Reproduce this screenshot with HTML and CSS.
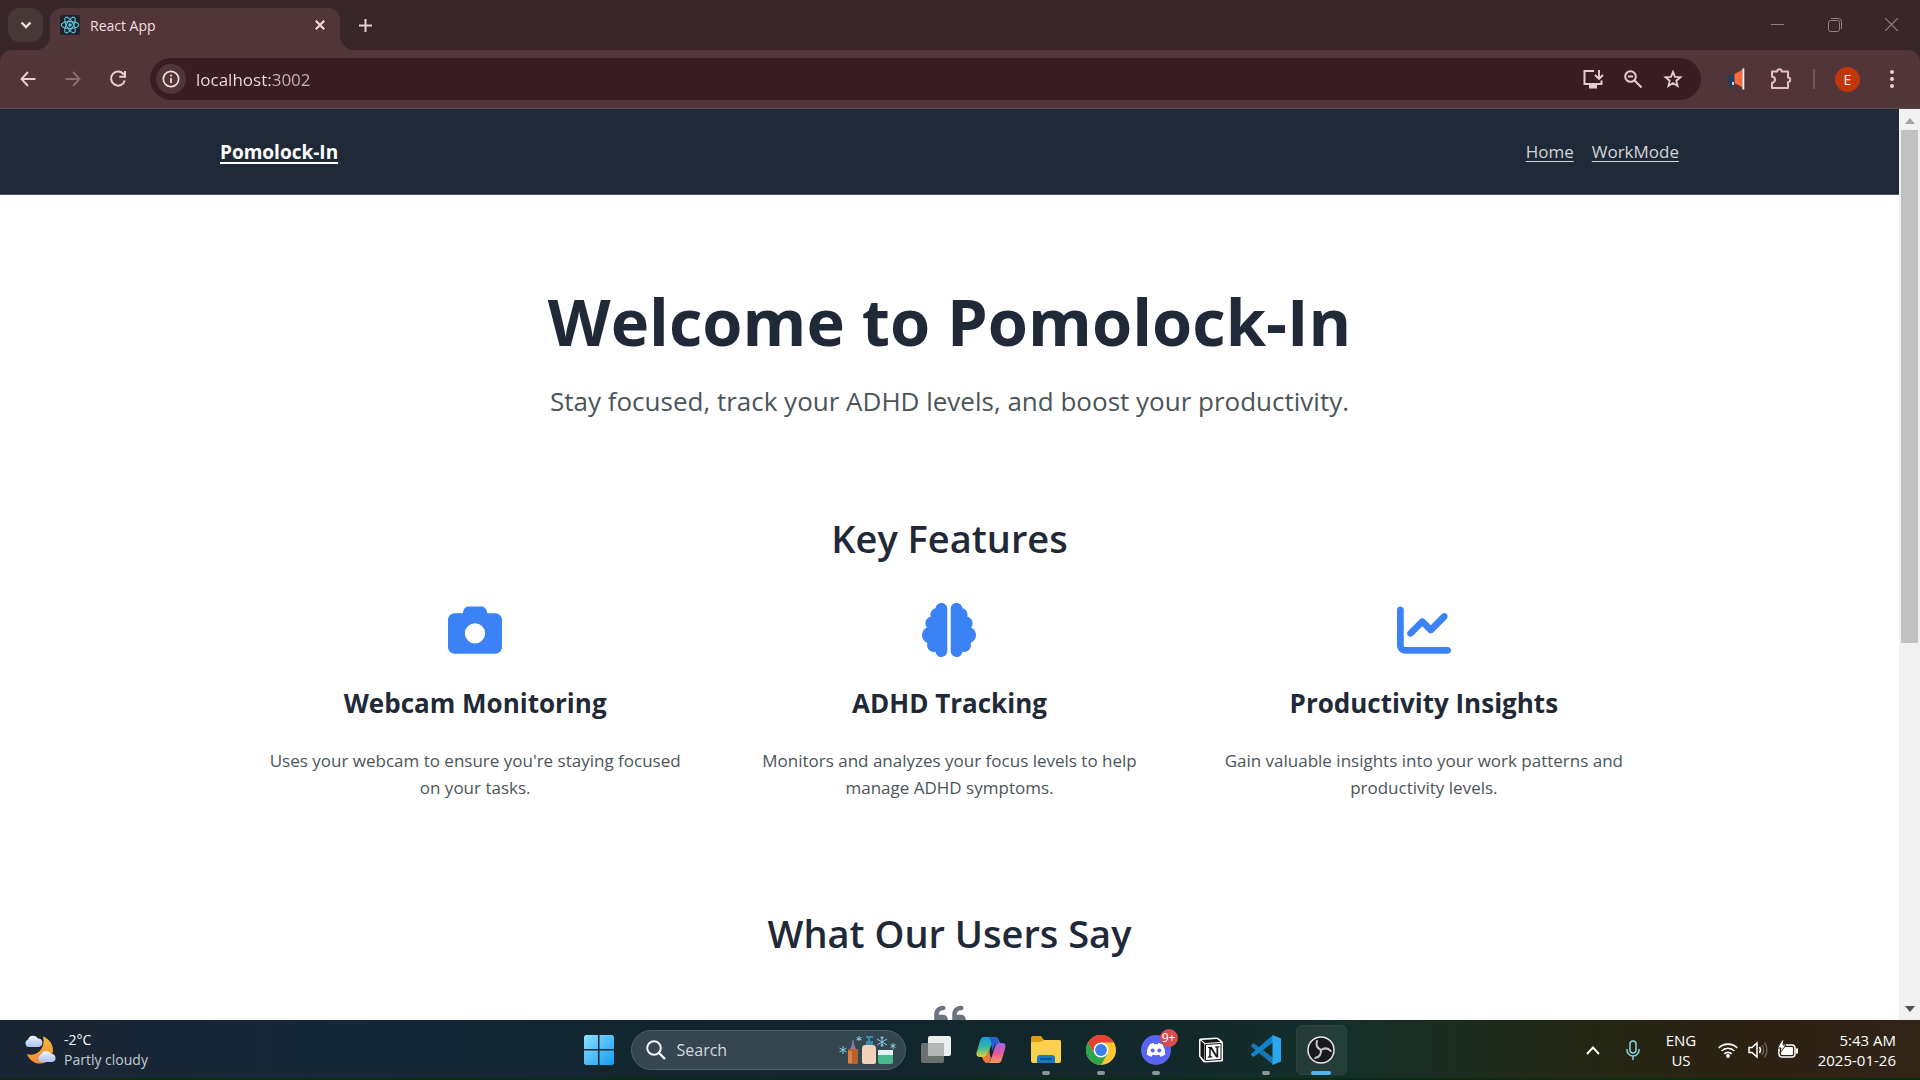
FILE: index.html
```html
<!DOCTYPE html>
<html lang="en">
<head>
<meta charset="utf-8">
<title>React App</title>
<link rel="stylesheet" href="styles.css">
</head>
<body>
<header class="browser">
  <div class="tabstrip">
    <button class="tab-search" aria-label="Search tabs"><svg width="12" height="8" viewBox="0 0 12 8"><path d="M1.500 1.500L6 6l4.500-4.500" fill="none" stroke="#f4dfe0" stroke-width="2.400"/></svg></button>
    <div class="tab">
      <svg width="20" height="20" viewBox="0 0 20 20"><rect width="20" height="20" rx="2" fill="#20242a"/><g fill="none" stroke="#5cc3dc" stroke-width="1.100"><ellipse cx="10" cy="10" rx="8.800" ry="3.400"/><ellipse cx="10" cy="10" rx="8.800" ry="3.400" transform="rotate(60 10 10)"/><ellipse cx="10" cy="10" rx="8.800" ry="3.400" transform="rotate(120 10 10)"/></g><circle cx="10" cy="10" r="1.800" fill="#5cc3dc"/></svg>
      <span class="tab-title">React App</span>
      <button class="tab-close" aria-label="Close tab"><svg width="10" height="10" viewBox="0 0 10 10"><path d="M.8.800l8.400 8.400M9.200.800L.8 9.200" stroke="#f4dfe0" stroke-width="2"/></svg></button>
    </div>
    <button class="new-tab" aria-label="New tab"><svg width="13" height="13" viewBox="0 0 13 13"><path d="M6.500 0v13M0 6.500h13" stroke="#e6cfd1" stroke-width="2"/></svg></button>
    <div class="window-controls">
      <button aria-label="Minimize"><svg width="13" height="13" viewBox="0 0 13 13"><path d="M0 6.500h13" stroke="#8f8083"/></svg></button>
      <button aria-label="Restore"><svg width="14" height="14" viewBox="0 0 14 14"><g fill="none" stroke="#8f8083"><rect x=".5" y="2.500" width="11" height="11" rx="2"/><path d="M3 .5h7.500a3 3 0 0 1 3 3V11"/></g></svg></button>
      <button aria-label="Close"><svg width="13" height="13" viewBox="0 0 13 13"><path d="M0 0l13 13M13 0L0 13" stroke="#8f8083" stroke-width="1.200"/></svg></button>
    </div>
  </div>
  <div class="toolbar">
    <button class="tool" aria-label="Back"><svg width="16" height="16" viewBox="0 0 16 16"><path d="M15.500 8H2M8 1L1.500 8 8 15" fill="none" stroke="#eccfd3" stroke-width="1.900"/></svg></button>
    <button class="tool" aria-label="Forward"><svg width="16" height="16" viewBox="0 0 16 16"><path d="M.5 8H14M8 1l6.500 7L8 15" fill="none" stroke="#8b6c70" stroke-width="1.900"/></svg></button>
    <button class="tool" aria-label="Reload"><svg width="18" height="18" viewBox="0 0 18 18"><path d="M14.800 4.600A7 7 0 1 0 15.800 10.500M16 1v5.800h-5.800" fill="none" stroke="#eccfd3" stroke-width="2"/></svg></button>
    <div class="omnibox">
      <button class="site-info" aria-label="Site information"><svg width="18" height="18" viewBox="0 0 18 18"><circle cx="9" cy="9" r="7.700" fill="none" stroke="#f0dcde" stroke-width="1.700"/><path d="M9 8v5M9 4.800v1.800" stroke="#f0dcde" stroke-width="1.800"/></svg></button>
      <input class="address" type="text" aria-label="Address" value="localhost:3002">
      <button class="action" aria-label="Install app"><svg width="22" height="20" viewBox="0 0 22 20"><path d="M12 2H2.500v13h17v-3.500" fill="none" stroke="#e5ccd0" stroke-width="2"/><path d="M7 16h8v3.500H7z" fill="#e5ccd0"/><path d="M17 1v8.500M13 6l4 4 4-4" fill="none" stroke="#e5ccd0" stroke-width="1.900"/></svg></button>
      <button class="action" aria-label="Zoom"><svg width="18" height="18" viewBox="0 0 18 18"><g fill="none" stroke="#e5ccd0" stroke-width="2"><circle cx="6.500" cy="6.500" r="5.300"/><path d="M10.500 10.500l7 7M4 6.500h5"/></g></svg></button>
      <button class="action" aria-label="Bookmark"><svg width="20" height="20" viewBox="0 0 20 20"><path d="M10 2.800l2 5 5.500.4-4.200 3.500 1.300 5.300-4.600-2.900L5.400 17l1.300-5.300-4.200-3.500L8 7.800z" fill="none" stroke="#e5ccd0" stroke-width="1.800"/></svg></button>
    </div>
    <button class="tool ext" aria-label="Megaphone"><svg width="20" height="22" viewBox="0 0 20 22"><path d="M1 7h8v9H7l-1 5H4l-1-5-2-2z" fill="#1f3f5c"/><path d="M8.500 6L16 2v17l-7.500-4z" fill="#fb6b3c"/><path d="M17.300.5v21" stroke="#f5eeee" stroke-width="2"/><path d="M7 14v3" stroke="#fff" stroke-width="1.500"/></svg></button>
    <button class="tool" aria-label="Extensions"><svg width="22" height="22" viewBox="0 0 22 22"><path d="M2 3.500h5.300a2 2 0 0 1 4.400 0H18v6a2 2 0 0 1 0 4.400V20H2v-5.300a3 3 0 0 0 0-6z" fill="none" stroke="#e5bfc6" stroke-width="2" stroke-linejoin="round"/></svg></button>
    <span class="divider"></span>
    <button class="avatar">E</button>
    <button class="tool menu" aria-label="Menu"><svg width="4" height="18" viewBox="0 0 4 18"><g fill="#eccfd3"><circle cx="2" cy="2" r="2"/><circle cx="2" cy="9" r="2"/><circle cx="2" cy="16" r="2"/></g></svg></button>
  </div>
</header>

<div class="viewport">
  <div class="page">
    <nav class="navbar">
      <div class="container nav-row">
        <a class="brand" href="#">Pomolock-In</a>
        <div class="nav-links"><a href="#">Home</a><a href="#">WorkMode</a></div>
      </div>
    </nav>
    <main class="container">
      <section class="hero">
        <h1>Welcome to Pomolock-In</h1>
        <p>Stay focused, track your ADHD levels, and boost your productivity.</p>
      </section>
      <section class="features">
        <h2>Key Features</h2>
        <div class="feature-grid">
          <article class="feature">
            <svg class="feature-icon" viewBox="0 0 512 512"><path d="M149.100 64.800L138.700 96H64C28.700 96 0 124.700 0 160V416c0 35.300 28.700 64 64 64H448c35.300 0 64-28.700 64-64V160c0-35.300-28.700-64-64-64H373.300L362.900 64.800C356.400 45.200 338.100 32 317.400 32H194.600c-20.700 0-39 13.200-45.500 32.800zM256 192a96 96 0 1 1 0 192 96 96 0 1 1 0-192z"/></svg>
            <h3>Webcam Monitoring</h3>
            <p>Uses your webcam to ensure you're staying focused on your tasks.</p>
          </article>
          <article class="feature">
            <svg class="feature-icon" viewBox="0 0 512 512"><path d="M184 0c30.900 0 56 25.100 56 56V456c0 30.900-25.100 56-56 56c-28.900 0-52.700-21.900-55.700-50.100c-5.200 1.400-10.700 2.100-16.300 2.100c-35.300 0-64-28.700-64-64c0-7.400 1.300-14.600 3.600-21.200C21.400 367.400 0 338.200 0 304c0-31.900 18.700-59.500 45.800-72.300C37.100 220.800 32 207 32 192c0-30.700 21.600-56.300 50.400-62.600C80.800 123.900 80 118 80 112c0-29.900 20.600-55.100 48.300-62.100C131.300 21.900 155.100 0 184 0zM328 0c28.900 0 52.600 21.900 55.700 49.900c27.800 7 48.300 32.100 48.300 62.100c0 6-.8 11.900-2.400 17.400c28.800 6.200 50.400 31.900 50.400 62.600c0 15-5.100 28.800-13.800 39.700C493.300 244.500 512 272.100 512 304c0 34.200-21.400 63.400-51.600 74.800c2.300 6.600 3.600 13.800 3.600 21.200c0 35.300-28.700 64-64 64c-5.600 0-11.100-.7-16.300-2.100c-3 28.200-26.800 50.100-55.700 50.100c-30.900 0-56-25.100-56-56V56c0-30.900 25.100-56 56-56z"/></svg>
            <h3>ADHD Tracking</h3>
            <p>Monitors and analyzes your focus levels to help manage ADHD symptoms.</p>
          </article>
          <article class="feature">
            <svg class="feature-icon" viewBox="0 0 512 512"><path d="M64 64c0-17.700-14.300-32-32-32S0 46.300 0 64V400c0 44.200 35.800 80 80 80H480c17.700 0 32-14.300 32-32s-14.300-32-32-32H80c-8.800 0-16-7.200-16-16V64zm406.600 86.600c12.500-12.500 12.500-32.800 0-45.300s-32.800-12.500-45.300 0L320 210.700l-57.400-57.400c-12.500-12.500-32.800-12.500-45.300 0l-112 112c-12.500 12.500-12.500 32.800 0 45.300s32.800 12.500 45.300 0L240 221.300l57.400 57.400c12.500 12.500 32.800 12.500 45.300 0l128-128z"/></svg>
            <h3>Productivity Insights</h3>
            <p>Gain valuable insights into your work patterns and productivity levels.</p>
          </article>
        </div>
      </section>
      <section class="testimonials">
        <h2>What Our Users Say</h2>
        <svg class="quote" viewBox="0 0 448 512"><path id="q" d="M0 216C0 149.700 53.700 96 120 96h8c17.700 0 32 14.300 32 32s-14.300 32-32 32h-8c-30.900 0-56 25.100-56 56v8h64c35.300 0 64 28.700 64 64v64c0 35.300-28.700 64-64 64H64c-35.300 0-64-28.700-64-64V216z"/><use href="#q" x="256"/></svg>
      </section>
    </main>
  </div>
  <div class="scrollbar">
    <svg width="10" height="6" viewBox="0 0 10 6"><path d="M0 6l5-6 5 6z" fill="#a3a3a3"/></svg>
    <div class="track"><div class="thumb"></div></div>
    <svg width="10" height="6" viewBox="0 0 10 6"><path d="M0 0l5 6 5-6z" fill="#505050"/></svg>
  </div>
</div>

<footer class="taskbar">
  <button class="weather">
    <svg width="32" height="30" viewBox="0 0 32 30"><defs><linearGradient id="moon" x2="0" y2="1"><stop offset="0" stop-color="#f6b92f"/><stop offset="1" stop-color="#f08a3c"/></linearGradient><linearGradient id="cl" x2="0" y2="1"><stop offset="0" stop-color="#f0f5ff"/><stop offset="1" stop-color="#a9c2f0"/></linearGradient></defs><path d="M19 1.500C31 6 32 20 23 26.500 16 31 6 28 3 19c9 3 19-5 16-17.500z" fill="url(#moon)"/><path d="M4 12a4 4 0 0 1 0-7.500 5.500 5.500 0 0 1 10-1A4.300 4.300 0 0 1 15 12z" fill="url(#cl)"/><path d="M17 27a4 4 0 0 1 0-7.500 5.500 5.500 0 0 1 10-.5 4 4 0 0 1 1 8z" fill="url(#cl)"/></svg>
    <span class="weather-text"><span>-2°C</span><span class="dim">Partly cloudy</span></span>
  </button>
  <div class="apps">
    <button class="app" aria-label="Start"><svg width="30" height="30" viewBox="0 0 30 30"><defs><linearGradient id="win" x2="1" y2="1"><stop offset="0" stop-color="#8be0ff"/><stop offset="1" stop-color="#159cf0"/></linearGradient></defs><path d="M1.500 0H14v14H0V1.500zM15.500 0h13L30 1.500V14H15.500zM0 15.500h14V30H1.500L0 28.500zM15.500 15.500H30v13L28.500 30h-13z" fill="url(#win)"/></svg></button>
    <label class="search">
      <svg width="20" height="20" viewBox="0 0 20 20"><circle cx="8" cy="8" r="6.800" fill="none" stroke="#f0f4f6" stroke-width="2"/><path d="M13 13l6 6" stroke="#f0f4f6" stroke-width="2.400"/></svg>
      <input type="search" placeholder="Search" aria-label="Search">
      <svg width="58" height="30" viewBox="0 0 58 30"><path d="M10 14h10v14q0 1-1 1h-8q-1 0-1-1z" fill="#b9612c"/><path d="M10 16h4v12h-4z" fill="#da8145"/><path d="M12 14l2-5q0-4 1-4t1 4l2 5z" fill="#8c74ad"/><path d="M24 14q0-4 3-4h8q3 0 3 4v13q0 2-2 2H26q-2 0-2-2z" fill="#f2d2bd"/><path d="M28 6h7v4h-7zM28 1h7v2h-3v3h-2V3h-2z" fill="#368da7"/><path d="M40 16h15v11q0 2-2 2H42q-2 0-2-2z" fill="#45b98b"/><path d="M40 15h15v5H40z" fill="#e4f3f0"/><g stroke="#86cae5" stroke-width="1"><path d="M44 1v11M39 4l10 6M49 4l-10 6M42.500 2l1.500 2 1.500-2M42.500 11l1.500-2 1.500 2M5 11v8M1.500 13l7 4M8.500 13l-7 4M21 1v5M18.500 2.500l5 2.500M23.500 2.500l-5 2.500M55 8v6M52.500 9.500l5 3M57.500 9.500l-5 3" fill="none"/></g></svg>
    </label>
    <button class="app" aria-label="Task view"><svg width="30" height="30" viewBox="0 0 30 30"><rect x="0" y="8" width="23" height="20" rx="2" fill="#6c716f"/><rect x="7" y="1" width="23" height="20" rx="2" fill="#eceded"/><path d="M7 8h16v13H9q-2 0-2-2z" fill="#b5b8b7"/></svg></button>
    <button class="app" aria-label="Copilot"><svg width="30" height="28" viewBox="0 0 30 28"><defs><linearGradient id="c1" x2="0" y2="1"><stop offset="0" stop-color="#159ade"/><stop offset=".5" stop-color="#35b7a5"/><stop offset="1" stop-color="#e2cf35"/></linearGradient><linearGradient id="c2" x2="0" y2="1"><stop offset="0" stop-color="#9a66e9"/><stop offset=".5" stop-color="#e5579d"/><stop offset="1" stop-color="#fb9a58"/></linearGradient></defs><path d="M8 1h11q3 0 4 4l1 2h-5q-3 0-4 3l-3 7q-1 4-4 4H4q-5 0-3-6L4 5q1-4 4-4z" fill="url(#c1)"/><path d="M22 27H11q3 0 4-4l4-12q1-4 4-4h3q5 0 3 6l-3 10q-1 4-4 4z" fill="url(#c2)"/><path d="M13 1h6q3 0 4 6-4 0-5 4l-2 4q0-9-3-14z" fill="#2b5cd1"/><path d="M6 21h4l4-8q-1 6 1 9-1 5-4 5-3 0-5-6z" fill="#f0793e"/></svg></button>
    <button class="app running" aria-label="File Explorer"><svg width="30" height="28" viewBox="0 0 30 28"><path d="M0 2q0-2 2-2h8l3 4h15q2 0 2 2v6H0z" fill="#dc9d12"/><path d="M0 6h9l4-2h15q2 0 2 2v19q0 2-2 2H2q-2 0-2-2z" fill="#fcd04c"/><path d="M6 27v-5q0-3 3-3h12q3 0 3 3v5z" fill="#167bc7"/><path d="M10 23h10" stroke="#0c5291" stroke-width="2" stroke-linecap="round"/></svg></button>
    <button class="app running" aria-label="Chrome"><svg width="30" height="30" viewBox="0 0 30 30"><circle cx="15" cy="15" r="15" fill="#fcc934"/><path d="M15 7.500h13A15 15 0 0 0 2 7.500L8.500 19z" fill="#e34234"/><path d="M2 7.500A15 15 0 0 0 15 30l6.500-11.200L15 15 8.500 18.800z" fill="#31a350"/><circle cx="15" cy="15" r="7.400" fill="#fff"/><circle cx="15" cy="15" r="5.900" fill="#3c7ee8"/></svg></button>
    <button class="app running" aria-label="Discord"><svg width="30" height="30" viewBox="0 0 30 30"><circle cx="15" cy="15" r="15" fill="#5865f2"/><path d="M8.500 9.500q2-1.200 4.200-1.500l.7 1.300h3.200l.7-1.300q2.200.3 4.200 1.500 3 4.500 2.800 10-2.300 1.700-4.800 2.300l-1.200-2q-3.300.8-6.600 0l-1.200 2Q8 21.200 5.700 19.500q-.2-5.500 2.800-10z" fill="#fff"/><circle cx="11.700" cy="15.500" r="2" fill="#5865f2"/><circle cx="18.300" cy="15.500" r="2" fill="#5865f2"/></svg><span class="badge">9+</span></button>
    <button class="app" aria-label="Notion"><svg width="26" height="26" viewBox="0 0 26 26"><path d="M1 3q0-1.500 1.500-1.600L18 .5q1.500 0 3 1l3 2.500q1 1 1 2v17q0 1.500-1.500 1.600L7 25.500q-1.500 0-2.500-1.200L1.500 20Q1 19.500 1 18.500z" fill="#fff"/><path d="M2.500 3.500l4 3.500v16.500l-4-4.500zM7 6L3.500 3 19 2l3.500 3z" fill="#151515"/><path d="M7.500 7.500L23 6.500v16L7.500 23.500z" fill="#fff" stroke="#151515"/><path d="M10 10l3.500-.2 5 8v-7l-1.500-.3V9.500l4.500-.2v1l-1.300.3v9.600l-2 .2-5.500-8.400v7.200l1.600.3v1l-4.500.2v-1l1.400-.4V11L10 11z" fill="#151515"/></svg></button>
    <button class="app running" aria-label="Visual Studio Code"><svg width="30" height="30" viewBox="0 0 30 30"><path d="M0 10.500L2.500 8l20 15v7L0 11.500z" fill="#1877b8"/><path d="M0 19L22 0v7.500L2.500 22 0 20z" fill="#1482ca"/><path d="M21.500 0L30 3.500v23L21.500 30z" fill="#2aa7ee"/></svg></button>
    <button class="app active" aria-label="OBS Studio"><svg width="28" height="28" viewBox="0 0 28 28"><circle cx="14" cy="14" r="13" fill="#1b191b" stroke="#e8e8e8" stroke-width="1.500"/><g fill="none" stroke="#c9c9cb" stroke-width="2" stroke-linecap="round"><path d="M14 14Q8 11 10 5"/><path d="M14 14Q8 11 10 5" transform="rotate(120 14 14)"/><path d="M14 14Q8 11 10 5" transform="rotate(240 14 14)"/></g></svg></button>
  </div>
  <div class="tray">
    <button class="chevron" aria-label="Hidden icons"><svg width="14" height="9" viewBox="0 0 14 9"><path d="M1 8l6-6.500L13 8" fill="none" stroke="#fff" stroke-width="1.900"/></svg></button>
    <button class="mic" aria-label="Microphone"><svg width="14" height="20" viewBox="0 0 14 20"><g fill="none" stroke="#8bd3dc" stroke-width="1.500"><rect x="4" y="1" width="6" height="12" rx="3"/><path d="M1 9v1a6 6 0 0 0 12 0V9M7 16v4"/></g></svg></button>
    <button class="lang"><span>ENG</span><span>US</span></button>
    <button class="status" aria-label="Network, volume and battery">
      <svg width="20" height="16" viewBox="0 0 20 16"><g fill="none" stroke="#fff" stroke-width="1.600"><path d="M.7 6a13 13 0 0 1 18.600 0M3.500 9a9 9 0 0 1 13 0M6.300 12a5 5 0 0 1 7.400 0"/></g><circle cx="10" cy="14" r="1.900" fill="#fff"/></svg>
      <svg width="20" height="18" viewBox="0 0 20 18"><path d="M1 6.500h3L9 2v14l-5-4.500H1zM11.500 6q2 3 0 6" fill="none" stroke="#fff" stroke-width="1.500"/><path d="M14 4q3.500 5 0 10M16.500 1.500q5 7.500 0 15" fill="none" stroke="#76705f" stroke-width="1.200"/></svg>
      <svg width="20" height="18" viewBox="0 0 20 18"><rect x="1" y="4" width="16" height="12" rx="3" fill="none" stroke="#fff" stroke-width="1.600"/><rect x="3" y="6" width="12" height="8" rx="1" fill="#fff"/><path d="M18 7.500h2v5h-2z" fill="#fff"/><path d="M4-1L-.5 7H3l-1 5 6-8H5l1-5z" fill="#fff" stroke="#2a2315"/></svg>
    </button>
    <button class="clock"><span>5:43 AM</span><span>2025-01-26</span></button>
  </div>
</footer>
</body>
</html>
```
FILE: styles.css
```css
* { box-sizing: border-box; }
html, body { height: 100%; }
body {
  margin: 0;
  display: flex;
  flex-direction: column;
  overflow: hidden;
  font-family: "Open Sans", "Noto Sans", sans-serif;
  background: #fff;
}
button {
  display: flex;
  align-items: center;
  justify-content: center;
  flex: none;
  padding: 0;
  border: 0;
  background: none;
  color: inherit;
  font: inherit;
}
svg { display: block; flex: none; }
h1, h2, h3, p { margin: 0; }

/* Browser chrome */
.browser { flex: none; background: #39262b; border-bottom: 1px solid #5a4a4f; }
.tabstrip { display: flex; height: 50px; padding-left: 8px; }
.tab-search { width: 35px; height: 34px; margin: 8px 7px 0 0; border-radius: 12px; background: #453836; }
.tab {
  position: relative;
  display: flex;
  align-items: center;
  width: 290px;
  height: 42px;
  margin-top: 8px;
  padding: 0 8px 8px 10px;
  border-radius: 12px 12px 0 0;
  background: #523539;
}
.tab::before, .tab::after {
  content: "";
  position: absolute;
  bottom: 0;
  width: 14px;
  height: 14px;
}
.tab::before { right: 100%; background: radial-gradient(circle at 0 0, transparent 14px, #523539 14px); }
.tab::after { left: 100%; background: radial-gradient(circle at 100% 0, transparent 14px, #523539 14px); }
.tab-title { flex: 1; margin-left: 10px; color: #f4dfe0; font-size: 14px; }
.tab-close { width: 24px; height: 24px; }
.new-tab { width: 34px; height: 34px; margin: 8px 0 0 8px; }
.window-controls { display: flex; margin-left: auto; }
.window-controls button { width: 57px; height: 49px; }
.toolbar {
  display: flex;
  align-items: center;
  height: 58px;
  padding: 0 13px 0 5px;
  border-radius: 12px 12px 0 0;
  background: #523539;
}
.tool { width: 45px; height: 40px; }
.omnibox {
  display: flex;
  align-items: center;
  flex: 1;
  height: 42px;
  margin-left: 10px;
  padding: 0 8px 0 6px;
  border-radius: 21px;
  background: #381e24;
}
.site-info { width: 30px; height: 30px; border-radius: 50%; background: #523539; }
.address {
  flex: 1;
  min-width: 0;
  margin-left: 10px;
  padding: 0;
  border: 0;
  outline: 0;
  background: linear-gradient(to right, #f4dfe0 75px, #d0b6ba 75px) text;
  color: transparent;
  font: 17px "Open Sans", sans-serif;
}
.action { width: 40px; height: 40px; }
.ext { margin-left: 12px; }
.divider { width: 2px; height: 20px; margin: 0 20px 0 10px; background: #71545a; }
.avatar { width: 25px; height: 25px; border-radius: 50%; background: #c3360c; color: #fff; font-size: 14px; }
.menu { width: 30px; margin-left: 17px; }

/* Page */
.viewport { display: flex; flex: 1; min-height: 0; }
.page { flex: 1; min-width: 0; overflow: hidden; }
.container { width: 100%; max-width: 1523px; margin: 0 auto; padding: 0 32px; }
.navbar { background: #1f2937; border-bottom: 1px solid #4b5563; }
.nav-row { display: flex; align-items: center; justify-content: space-between; height: 85px; }
.navbar a { text-underline-offset: 3px; }
.brand { color: #fff; font-size: 19px; font-weight: 700; text-decoration-thickness: 2px; }
.nav-links { display: flex; gap: 18px; }
.nav-links a { color: #d1d5db; font-size: 17px; }
.hero { padding-top: 82px; text-align: center; }
h1 { color: #1f2937; font-size: 65px; font-weight: 700; line-height: 88px; }
.hero p { padding-top: 18px; color: #4b5559; font-size: 26px; line-height: 36px; }
h2 { color: #1f2937; font-size: 38px; font-weight: 600; line-height: 48px; text-align: center; }
.features { padding-top: 95px; }
.feature-grid { display: grid; grid-template-columns: repeat(3, 1fr); gap: 32px; padding: 41px 34px 0; }
.feature { display: flex; flex-direction: column; align-items: center; text-align: center; }
.feature-icon { width: 54px; height: 54px; fill: #3b82f6; }
h3 { margin-top: 28px; color: #1f2937; font-size: 26px; font-weight: 700; line-height: 36px; }
.feature p { max-width: 420px; margin-top: 26px; color: #4b5559; font-size: 17px; line-height: 27px; }
.testimonials { padding-top: 108px; }
.quote { width: 32px; height: 36px; margin: 42px auto 0; fill: #6b7280; }
.scrollbar {
  display: flex;
  flex-direction: column;
  align-items: center;
  width: 21px;
  padding: 9px 0 8px;
  background: #f1f1f1;
}
.track { flex: 1; width: 17px; margin: 6px 0; }
.thumb { height: 59%; background: #c1c1c1; }

/* Taskbar */
.taskbar {
  display: grid;
  grid-template-columns: 1fr auto 1fr;
  flex: none;
  height: 60px;
  padding-top: 2px;
  border-bottom: 2px solid #0b2c12;
  background: linear-gradient(to right, #1a2534, #14283a 18%, #12262e 35%, #12282b 60%, #14302a 70%, #242815 82%, #2d2113 92%, #302517);
  color: #fff;
  font-size: 14px;
  line-height: 20px;
}
.weather { justify-self: start; padding-left: 24px; gap: 8px; }
.weather-text { display: flex; flex-direction: column; text-align: left; }
.dim { color: #c5ccd2; }
.apps { display: flex; align-items: center; }
.app { position: relative; width: 55px; height: 50px; }
.search {
  display: flex;
  align-items: center;
  width: 275px;
  height: 40px;
  margin: 0 3px 0 4px;
  padding: 0 9px 0 14px;
  border: 1px solid #4e5f68;
  border-radius: 20px;
  background: #34464f;
}
.search input {
  flex: 1;
  min-width: 0;
  padding: 0 0 0 11px;
  border: 0;
  outline: 0;
  background: none;
  color: #d5dbdf;
  font: 16px "Open Sans", sans-serif;
}
.search input::placeholder { color: #d5dbdf; opacity: 1; }
.running::after, .active::after {
  content: "";
  position: absolute;
  bottom: 0;
  width: 8px;
  height: 4px;
  border-radius: 2px;
  background: #8b979b;
}
.active::before {
  content: "";
  position: absolute;
  inset: 0 2px;
  border: 1px solid #31453f;
  border-radius: 6px;
  background: #ffffff12;
}
.active svg { position: relative; }
.active::after { width: 20px; background: #55b4ec; }
.badge {
  position: absolute;
  top: 4px;
  left: 31px;
  width: 18px;
  height: 18px;
  border-radius: 50%;
  background: #dc4b51;
  font-size: 12px;
  line-height: 17px;
}
.tray { display: flex; align-items: center; justify-self: end; padding-right: 24px; }
.chevron, .mic { width: 40px; height: 50px; }
.lang, .clock { flex-direction: column; font-size: 15px; }
.lang { width: 56px; }
.status { gap: 10px; padding: 0 12px 0 9px; }
.status svg { overflow: visible; }
.clock { align-items: flex-end; width: 86px; }
```
